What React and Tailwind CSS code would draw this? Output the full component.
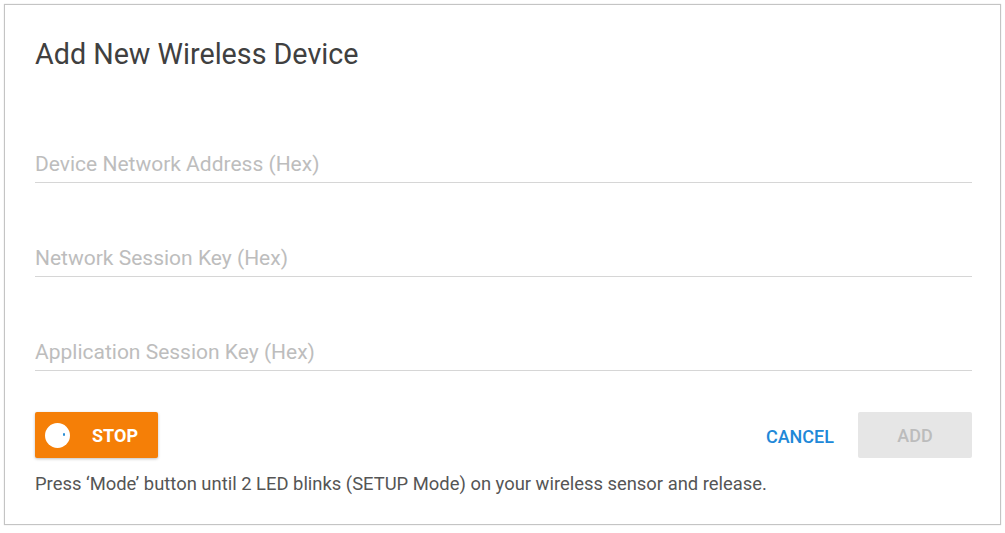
import { useState } from 'react'

const fields = [
  'Device Network Address (Hex)',
  'Network Session Key (Hex)',
  'Application Session Key (Hex)',
]

function Field({ label }) {
  const [value, setValue] = useState('')
  return (
    <div className="h-[94px] flex flex-col justify-end">
      <input
        value={value}
        onChange={(e) => setValue(e.target.value)}
        placeholder={label}
        className="w-full h-[40px] pt-[2px] bg-transparent outline-none border-b border-[#d6d6d6] text-[21px] text-[#333] placeholder:text-[#bdbdbd]"
      />
    </div>
  )
}

export default function App() {
  const [running, setRunning] = useState(true)

  return (
    <div className="w-[1005px] h-[533px] bg-white pt-[4px] pl-[4px] font-['Roboto',sans-serif]">
      <div className="w-[997px] h-[521px] border border-[#c4c4c4] shadow-[0_0_1px_rgba(0,0,0,0.2)] pl-[30px] pr-[28px]">
        {/* Title */}
        <h2 className="pt-[33px] text-[28.7px] leading-[32px] text-[#404040]">
          Add New Wireless Device
        </h2>

        {/* Inputs */}
        <div className="mt-[19px]">
          {fields.map((f) => (
            <Field key={f} label={f} />
          ))}
        </div>

        {/* Actions */}
        <div className="flex items-center justify-between mt-[41px]">
          <button
            onClick={() => setRunning(!running)}
            className="w-[123px] h-[46px] bg-[#f57f07] rounded-[2px] shadow-[0_1px_3px_rgba(0,0,0,0.25)] flex items-center pl-[10px]"
          >
            <span className="relative w-[25px] h-[25px] rounded-full bg-white">
              <span className="absolute top-[10px] left-[18px] w-[2px] h-[3px] bg-[#2b8fd6] rounded-full" />
            </span>
            <span className="ml-[22px] text-white text-[18px] font-bold">
              {running ? 'STOP' : 'START'}
            </span>
          </button>
          <div className="flex items-center">
            <button className="text-[18px] font-medium text-[#2088d8] mr-[24px] mt-[2px]">
              CANCEL
            </button>
            <button disabled className="w-[114px] h-[46px] bg-[#e6e6e6] rounded-[2px] text-[18px] font-medium text-[#bcbcbc]">
              ADD
            </button>
          </div>
        </div>

        <p className="mt-[16px] text-[18.4px] leading-[20px] text-[#555]">
          Press ‘Mode’ button until 2 LED blinks (SETUP Mode) on your wireless sensor and release.
        </p>
      </div>
    </div>
  )
}
